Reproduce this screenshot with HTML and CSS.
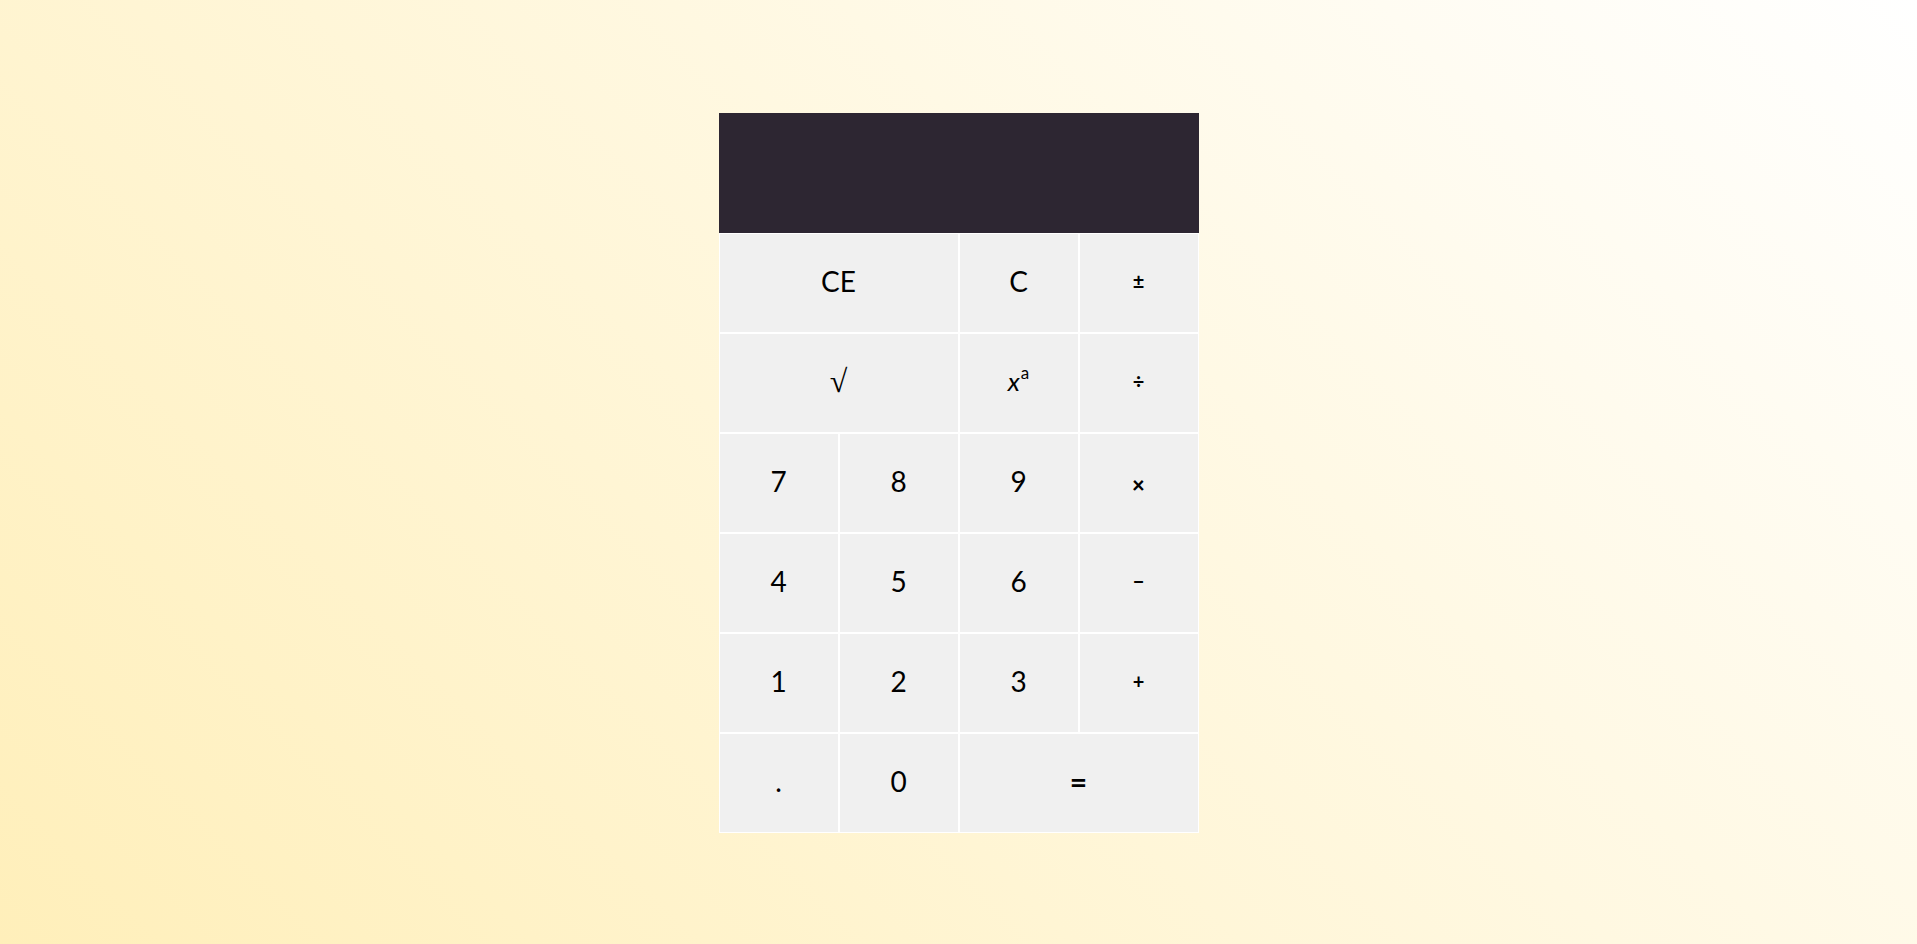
FILE: index.html
```html
<!DOCTYPE html>
<html lang="en">
<head>
<meta charset="utf-8">
<title>Calculator</title>
<link rel="stylesheet" href="styles.css">
</head>
<body>
<main class="page">
  <div class="calc">
    <div class="display"></div>
    <div class="keys">
      <button class="key span2">CE</button>
      <button class="key">C</button>
      <button class="key op">±</button>
      <button class="key span2 sqrt">√</button>
      <button class="key pow"><i>x</i><sup>a</sup></button>
      <button class="key op">÷</button>
      <button class="key">7</button>
      <button class="key">8</button>
      <button class="key">9</button>
      <button class="key op times">×</button>
      <button class="key">4</button>
      <button class="key">5</button>
      <button class="key">6</button>
      <button class="key op">−</button>
      <button class="key">1</button>
      <button class="key">2</button>
      <button class="key">3</button>
      <button class="key op">+</button>
      <button class="key">.</button>
      <button class="key">0</button>
      <button class="key span2 eq">=</button>
    </div>
  </div>
</main>
</body>
</html>
```

FILE: styles.css
```css
html, body {
  margin: 0;
  height: 100%;
}
body {
  background: linear-gradient(45deg, #ffefba, #ffffff);
  font-family: "Lato", "Noto Sans", sans-serif;
}
.page {
  box-sizing: border-box;
  height: 100%;
  padding-top: 2px;
  display: flex;
  align-items: center;
  justify-content: center;
}
.calc {
  width: 480px;
  display: flex;
  flex-direction: column;
}
.display {
  height: 120px;
  background: #2d2632;
}
.keys {
  display: grid;
  grid-template-columns: repeat(4, 120px);
  grid-auto-rows: 100px;
}
.key {
  margin: 0;
  padding: 0 0 4px;
  border: 1px solid #ffffff;
  background: #f0f0f0;
  color: #000;
  font-family: inherit;
  font-size: 28px;
  font-weight: 400;
  line-height: 1;
  display: flex;
  align-items: center;
  justify-content: center;
}
.span2 {
  grid-column: span 2;
}
.op {
  font-size: 20px;
  font-weight: 700;
}
.times {
  font-size: 22px;
  font-weight: 900;
  padding: 4px 0 0;
}
.eq {
  font-size: 30px;
  font-weight: 700;
}
.sqrt {
  font-family: "Liberation Serif", serif;
  font-size: 32px;
  padding-bottom: 4px;
}
.pow {
  font-size: 26px;
}
.pow i {
  font-style: italic;
}
.pow sup {
  font-size: 17px;
  vertical-align: 0;
  position: relative;
  top: -9px;
  margin-left: 1px;
}
```
